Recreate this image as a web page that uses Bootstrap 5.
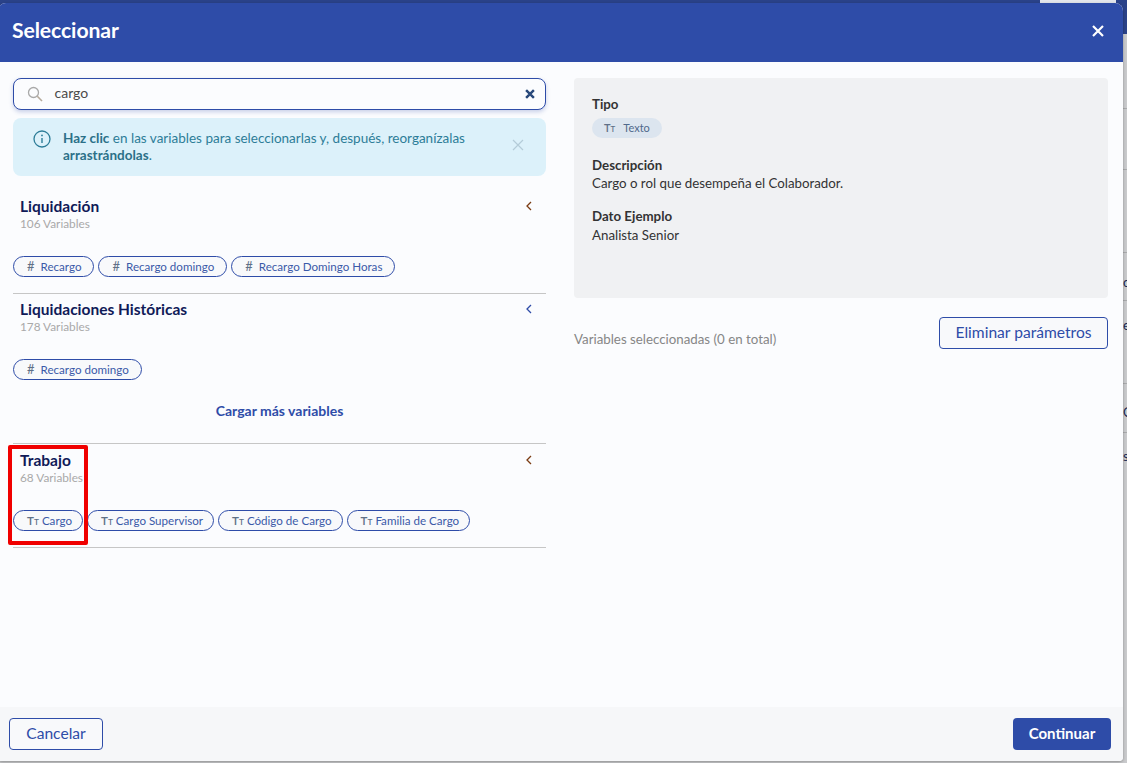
<!DOCTYPE html>
<html lang="es">
<head>
<meta charset="utf-8">
<title>Seleccionar</title>
<link href="https://cdn.jsdelivr.net/npm/bootstrap@5.3.0/dist/css/bootstrap.min.css" rel="stylesheet">
<style>
html,body{height:100%;overflow:hidden}
body{background:#c9cacc;font-family:"Lato","Noto Sans",sans-serif;color:#333;font-size:13.3px;position:relative}
.behind-bar{position:absolute;left:0;right:0;top:0;height:34px;background:#2a4289}
.behind-hello{position:absolute;left:1040px;top:0;width:76px;height:4px;background:#e3e6ec}
.behind-line{position:absolute;right:0;width:5px;height:1px;background:#a9aaac}
.behind-ch{position:absolute;left:1123px;width:4px;overflow:hidden;color:#1b2a55;font-size:13px;line-height:14px}
.sel-modal{position:absolute;left:-2px;top:3px;width:1125px;height:758px;border:0;border-radius:8px 8px 4px 4px;overflow:hidden;background:#fbfcfe;box-shadow:0 1px 3px rgba(0,0,0,.3)}
.sel-head{height:59px;background:#2e4ca8;color:#fff;padding:0 13px 3px 14px;border:0;border-radius:0}
.sel-title{font-size:21.2px;font-weight:700;line-height:1;letter-spacing:-.1px}
.sel-x{width:24px;height:24px;padding:0;background:none;border:0;display:flex;align-items:center;justify-content:center}
.sel-body{padding:16px 15px 0 15px;gap:28px;flex:1 1 auto;min-height:0}
.sel-left{width:533px;flex:none}
.sel-right{width:534px;flex:none}
.sel-search{height:32px;border:1.5px solid #2e4ca8;border-radius:8px;background:#fbfcfe;box-shadow:0 2px 4px rgba(46,76,168,.25);padding:0 10px 3px 12.5px;gap:12px;font-size:14px;color:#4a4a4a}
.sel-search span{flex:1 1 auto}
.sel-search svg{margin-top:3px}
.sel-alert{height:58px;margin:8px 0 0;padding:12px 20px 0 20px;border:0;border-radius:8px;background:#dcf1fa;color:#2d7d98;font-size:13.5px;line-height:17px;gap:12px}
.sel-alert p{margin:0;width:420px;flex:none}
.sel-alert b{color:#2b7088;font-weight:700}
.alert-x{margin:0 0 0 17px;padding-top:5px;display:block}
.sel-group{position:relative;border-bottom:1px solid #c6c6c6}
.sel-group-head{padding:0 14px 0 7px}
.sel-group-name{font-size:15.5px;font-weight:700;line-height:18px;color:#101a58}
.sel-count{font-size:11.8px;line-height:14px;color:#a9a9a9;margin-top:2px}
.g1{height:118px;padding-top:21px}
.g2{height:150px;padding-top:6px}
.g3{height:104px;padding-top:7px}
.chips{gap:4px;margin-top:25px}
.g2 .chips{margin-top:25px}
.g3 .chips{margin-top:25px}
.sel-chip{height:21px;border:1px solid #2e4ca8;border-radius:11px;background:#f8f9fb;color:#3b5aa8;font-size:11.6px;line-height:19px;padding:0 12px 0 13px;white-space:nowrap}
.sel-chip i{font-style:normal;font-size:13px;color:#5f7087;margin-right:6px}
.sel-chip.chip-text{padding-right:10px}
.tt{font-style:normal;font-weight:600;color:#5f7087;letter-spacing:0}
.tt small{font-size:.72em;font-weight:600}
.sel-chip .tt{margin-right:3px}
.sel-more{margin-top:22px;text-align:center;font-size:14px;font-weight:700;color:#2e4ca8;line-height:18px}
.sel-redbox{position:absolute;left:-5px;top:1px;width:80px;height:100px;border:4px solid #f00000;border-radius:2px;pointer-events:none}
.sel-detail{height:220px;background:#f0f1f3;border-radius:4px;padding:17px 18px;line-height:18px}
.sel-label{font-weight:700;color:#333}
.sel-type{display:inline-block;height:20px;width:70px;margin-top:5px;border-radius:10px;background:#dce5ef;color:#50698c;font-size:11px;line-height:20px;padding-left:12px}
.sel-type .tt{margin-right:8px}
.sel-detail-item{margin-top:18px}
.sel-detail-item + .sel-detail-item{margin-top:15px}
.sel-example{margin-top:1px}
.sel-total{color:#868686;margin-top:32px}
.sel-out{height:32px;border:1px solid #2e4ca8;border-radius:4px;background:#f8f9fb;color:#2e4ca8;font-size:15.6px;line-height:28px;padding:0 0 2px;text-align:center}
.out-del{width:169px;margin-top:19px}
.sel-foot{height:54px;background:#f6f7f9;border:0;border-radius:0;padding:0 12px 0 11px}
.out-cancel{width:94px}
.sel-go{width:98px;height:32px;border:0;border-radius:4px;background:#2e4ca8;color:#fff;font-size:15px;font-weight:700;padding:0 0 2px}
</style>
</head>
<body>
<div class="behind-bar"></div>
<div class="behind-hello"></div>
<div class="behind-line" style="top:108px"></div>
<div class="behind-line" style="top:169px"></div>
<div class="behind-line" style="top:252px"></div>
<div class="behind-line" style="top:300px"></div>
<div class="behind-line" style="top:383px"></div>
<div class="behind-line" style="top:432px"></div>
<span class="behind-ch" style="top:275px">c</span>
<span class="behind-ch" style="top:318px">e</span>
<span class="behind-ch" style="top:405px">C</span>
<span class="behind-ch" style="top:449px">s</span>

<div class="modal-content sel-modal d-flex flex-column">
  <div class="modal-header sel-head d-flex align-items-center justify-content-between">
    <div class="sel-title">Seleccionar</div>
    <button class="sel-x" type="button" aria-label="Cerrar">
      <svg width="12" height="12" viewBox="0 0 12 12"><path d="M1 1l10 10M11 1L1 11" stroke="#fff" stroke-width="2.2" fill="none"/></svg>
    </button>
  </div>

  <div class="modal-body sel-body d-flex">
    <div class="sel-left">
      <div class="sel-search d-flex align-items-center">
        <svg width="16" height="16" viewBox="0 0 16 16" fill="none"><circle cx="6.5" cy="6.5" r="5" stroke="#a9a9a9" stroke-width="1.3"/><path d="M10.3 10.3L15 15" stroke="#b5a99b" stroke-width="1.6"/></svg>
        <span>cargo</span>
        <svg width="10" height="10" viewBox="0 0 9 9"><path d="M1 1l7 7M8 1L1 8" stroke="#2a4a7c" stroke-width="2.2" fill="none"/></svg>
      </div>
      <div class="alert sel-alert d-flex align-items-start" role="alert">
        <svg class="flex-shrink-0" width="18" height="18" viewBox="0 0 18 18" fill="none"><circle cx="9" cy="9" r="8" stroke="#2d7d98" stroke-width="1.3"/><path d="M9 8v5" stroke="#2d7d98" stroke-width="1.4"/><circle cx="9" cy="5.4" r=".9" fill="#2d7d98"/></svg>
        <p><b>Haz clic</b> en las variables para seleccionarlas y, después, reorganízalas <b>arrastrándolas</b>.</p>
        <span class="alert-x"><svg width="12" height="12" viewBox="0 0 12 12"><path d="M1 1l10 10M11 1L1 11" stroke="#b4ccd8" stroke-width="1.2" fill="none"/></svg></span>
      </div>

      <div class="sel-group g1">
        <div class="sel-group-head d-flex justify-content-between">
          <div>
            <div class="sel-group-name">Liquidación</div>
            <div class="sel-count">106 Variables</div>
          </div>
          <svg class="mt-1" width="6" height="10" viewBox="0 0 6 10" fill="none"><path d="M5 1L1 5l4 4" stroke="#7a3b12" stroke-width="1.3"/></svg>
        </div>
        <div class="chips d-flex">
          <span class="sel-chip"><i>#</i>Recargo</span>
          <span class="sel-chip"><i>#</i>Recargo domingo</span>
          <span class="sel-chip"><i>#</i>Recargo Domingo Horas</span>
        </div>
      </div>

      <div class="sel-group g2">
        <div class="sel-group-head d-flex justify-content-between">
          <div>
            <div class="sel-group-name">Liquidaciones Históricas</div>
            <div class="sel-count">178 Variables</div>
          </div>
          <svg class="mt-1" width="6" height="10" viewBox="0 0 6 10" fill="none"><path d="M5 1L1 5l4 4" stroke="#2e4ca8" stroke-width="1.3"/></svg>
        </div>
        <div class="chips d-flex">
          <span class="sel-chip"><i>#</i>Recargo domingo</span>
        </div>
        <div class="sel-more">Cargar más variables</div>
      </div>

      <div class="sel-group g3">
        <div class="sel-group-head d-flex justify-content-between">
          <div>
            <div class="sel-group-name">Trabajo</div>
            <div class="sel-count">68 Variables</div>
          </div>
          <svg class="mt-1" width="6" height="10" viewBox="0 0 6 10" fill="none"><path d="M5 1L1 5l4 4" stroke="#7a3b12" stroke-width="1.3"/></svg>
        </div>
        <div class="chips d-flex">
          <span class="sel-chip chip-text"><span class="tt">T<small>T</small></span>Cargo</span>
          <span class="sel-chip chip-text"><span class="tt">T<small>T</small></span>Cargo Supervisor</span>
          <span class="sel-chip chip-text"><span class="tt">T<small>T</small></span>Código de Cargo</span>
          <span class="sel-chip chip-text"><span class="tt">T<small>T</small></span>Familia de Cargo</span>
        </div>
        <div class="sel-redbox"></div>
      </div>
    </div>

    <div class="sel-right">
      <div class="sel-detail">
        <div class="sel-label">Tipo</div>
        <span class="sel-type"><span class="tt">T<small>T</small></span>Texto</span>
        <div class="sel-detail-item">
          <div class="sel-label">Descripción</div>
          <div>Cargo o rol que desempeña el Colaborador.</div>
        </div>
        <div class="sel-detail-item">
          <div class="sel-label">Dato Ejemplo</div>
          <div class="sel-example">Analista Senior</div>
        </div>
      </div>
      <div class="d-flex justify-content-between align-items-start">
        <div class="sel-total">Variables seleccionadas (0 en total)</div>
        <button class="sel-out out-del" type="button">Eliminar parámetros</button>
      </div>
    </div>
  </div>

  <div class="modal-footer sel-foot d-flex justify-content-between">
    <button class="sel-out out-cancel m-0" type="button">Cancelar</button>
    <button class="sel-go m-0" type="button">Continuar</button>
  </div>
</div>
</body>
</html>
